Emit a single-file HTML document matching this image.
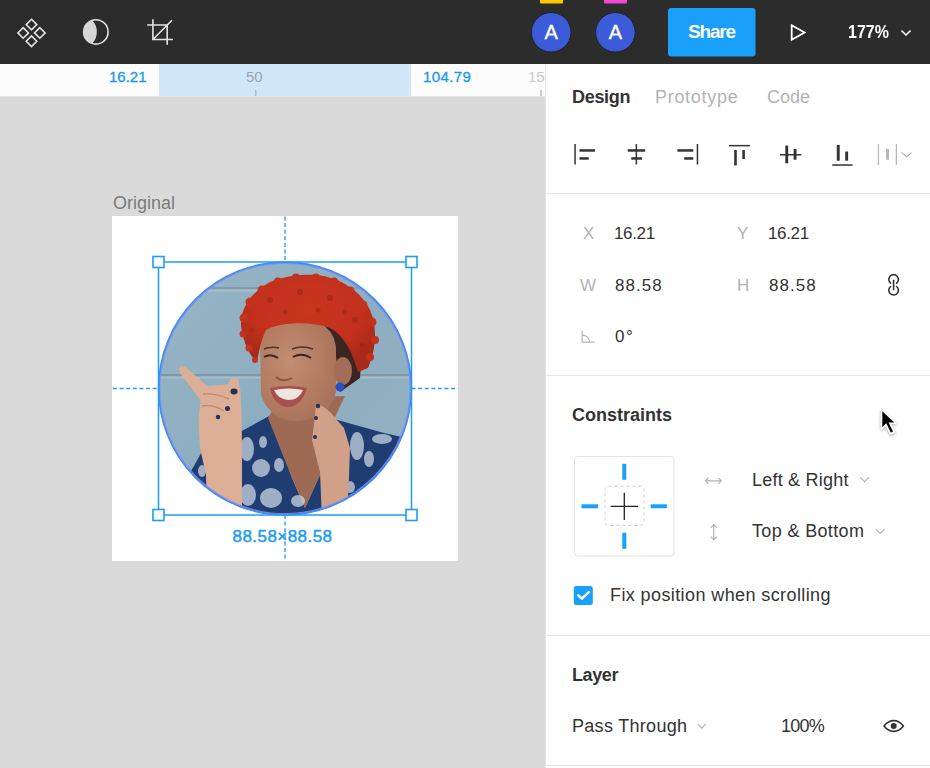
<!DOCTYPE html>
<html><head><meta charset="utf-8">
<style>
*{box-sizing:border-box;margin:0;padding:0}
html,body{width:930px;height:768px;overflow:hidden;background:#dadada;font-family:"Liberation Sans",sans-serif}
.a{position:absolute;white-space:nowrap}
#top{position:absolute;left:0;top:0;width:930px;height:64px;background:#2c2c2c}
#ruler{position:absolute;left:0;top:64px;width:546px;height:32px;background:#fcfcfc}
#rsel{position:absolute;left:159px;top:64px;width:252px;height:32px;background:#d0e7fa}
#rline{position:absolute;left:0;top:96px;width:546px;height:1px;background:#e6e6e6}
#panel{position:absolute;left:545px;top:64px;width:385px;height:704px;background:#fff;border-left:1px solid #e3e3e3}
.sep{position:absolute;left:546px;width:384px;height:1px;background:#e6e6e6}
.t{position:absolute;white-space:nowrap;line-height:1;color:#333}
</style></head><body>
<div id="top"></div>
<div id="ruler"></div>
<div id="rsel"></div>
<div id="rline"></div>
<div id="panel"></div>
<svg class="a" style="left:0;top:0" width="930" height="768" viewBox="0 0 930 768">
<!-- top bar icons -->
<g fill="none" stroke="#e3e3e3" stroke-width="1.6">
 <path d="M31.5,19.3 L36.8,24.6 L31.5,29.9 L26.2,24.6 Z"/>
 <path d="M23.2,27.6 L28.5,32.9 L23.2,38.2 L17.9,32.9 Z"/>
 <path d="M39.8,27.6 L45.1,32.9 L39.8,38.2 L34.5,32.9 Z"/>
 <path d="M31.5,35.9 L36.8,41.2 L31.5,46.5 L26.2,41.2 Z"/>
 <circle cx="95.9" cy="31.9" r="12.2"/>
 <path d="M147.2,25 H167.2 V44.7 M152.9,19.2 V39.5 H172.9 M152.9,39.5 L172,20.3"/>
</g>
<path d="M92.2,20.3 A12.2,12.2 0 0 0 92.2,43.5 A16.9,16.9 0 0 0 92.2,20.3 Z" fill="#d6d6d6"/>
<rect x="540" y="-2" width="23" height="5.5" rx="1" fill="#ffc700"/>
<rect x="604" y="-2" width="23" height="5.5" rx="1" fill="#ef48d4"/>
<circle cx="551.2" cy="32.3" r="19.8" fill="#3c5bd8" stroke="#222" stroke-width="1"/>
<circle cx="615.4" cy="32.3" r="19.8" fill="#3c5bd8" stroke="#222" stroke-width="1"/>
<rect x="668" y="8" width="87.5" height="48.5" rx="3" fill="#18a0fb"/>
<path d="M791.7,25.2 L804.6,32.5 L791.7,39.8 Z" fill="none" stroke="#fff" stroke-width="1.8"/>
<path d="M901.5,30.6 L906,35 L910.5,30.6" fill="none" stroke="#fff" stroke-width="1.5"/>
<!-- ruler ticks -->
<path d="M255.8,90 V96 M541,90 V96" stroke="#a0a0a0" stroke-width="1"/>
</svg>

<div class="sep" style="top:193px"></div>
<div class="sep" style="top:375px"></div>
<div class="sep" style="top:635px"></div>
<div class="sep" style="top:765px"></div>

<!-- top bar text -->
<div class="t" style="left:688px;top:22px;font-size:19px;font-weight:bold;color:#fff;letter-spacing:-1.2px">Share</div>
<div class="t" style="left:848px;top:22px;font-size:19px;font-weight:bold;color:#fff;transform:scaleX(0.84);transform-origin:0 0">177%</div>

<div class="t" style="left:544.6px;top:22px;font-size:20px;color:#fff;-webkit-text-stroke:0.35px #fff">A</div>
<div class="t" style="left:608.8px;top:22px;font-size:20px;color:#fff;-webkit-text-stroke:0.35px #fff">A</div>
<!-- ruler text -->
<div class="t" style="left:109px;top:69px;font-size:15px;color:#1a98ee;-webkit-text-stroke:0.3px #1a98ee">16.21</div>
<div class="t" style="left:246px;top:69px;font-size:15px;color:#9aa6ae">50</div>
<div class="t" style="left:423px;top:69px;font-size:15px;color:#1a98ee;-webkit-text-stroke:0.3px #1a98ee;letter-spacing:0.4px">104.79</div>
<div class="t" style="left:528px;top:69px;font-size:15px;color:#c8c8c8">15</div>

<!-- canvas -->
<div class="t" style="left:113px;top:194px;font-size:18px;color:#7a7a7a">Original</div>
<div class="a" style="left:112px;top:216px;width:346px;height:345px;background:#fff"></div>
<div class="t" style="left:232.5px;top:528px;font-size:17px;color:#1f9cf0;-webkit-text-stroke:0.5px #1f9cf0;letter-spacing:0.45px">88.58×88.58</div>

<!-- panel text -->
<div class="t" style="left:572px;top:88px;font-size:18px;font-weight:bold;color:#333;letter-spacing:-0.3px">Design</div>
<div class="t" style="left:655px;top:88px;font-size:18px;color:#b3b3b3;letter-spacing:0.7px">Prototype</div>
<div class="t" style="left:767px;top:88px;font-size:18px;color:#b3b3b3">Code</div>

<div class="t" style="left:583px;top:225px;font-size:17px;color:#b3b3b3">X</div>
<div class="t" style="left:614px;top:225px;font-size:17px;letter-spacing:-0.35px">16.21</div>
<div class="t" style="left:737px;top:225px;font-size:17px;color:#b3b3b3">Y</div>
<div class="t" style="left:768px;top:225px;font-size:17px;letter-spacing:-0.35px">16.21</div>
<div class="t" style="left:580px;top:277px;font-size:17px;color:#b3b3b3">W</div>
<div class="t" style="left:615px;top:277px;font-size:17px;letter-spacing:1.05px">88.58</div>
<div class="t" style="left:737px;top:277px;font-size:17px;color:#b3b3b3">H</div>
<div class="t" style="left:769px;top:277px;font-size:17px;letter-spacing:1.05px">88.58</div>
<div class="t" style="left:615px;top:328px;font-size:17px;letter-spacing:1.5px">0°</div>

<div class="t" style="left:572px;top:406px;font-size:18px;font-weight:bold">Constraints</div>
<div class="t" style="left:752px;top:471px;font-size:18px;letter-spacing:0.22px">Left &amp; Right</div>
<div class="t" style="left:752px;top:522px;font-size:18px;letter-spacing:0.35px">Top &amp; Bottom</div>
<div class="t" style="left:610px;top:586px;font-size:18px;letter-spacing:0.4px">Fix position when scrolling</div>

<div class="t" style="left:572px;top:666px;font-size:18px;font-weight:bold;letter-spacing:-0.4px">Layer</div>
<div class="t" style="left:572px;top:717px;font-size:18px;letter-spacing:0.3px">Pass Through</div>
<div class="t" style="left:781px;top:717px;font-size:18px;letter-spacing:-0.8px">100%</div>

<svg class="a" style="left:0;top:0" width="930" height="768" viewBox="0 0 930 768">
<defs>
 <clipPath id="cc"><circle cx="285" cy="388.5" r="126.5"/></clipPath>
</defs>
<!-- dashed guides -->
<g stroke="#2d9bf0" stroke-width="1.4" stroke-dasharray="4 2.6" fill="none">
 <path d="M285,216.5 V262"/>
 <path d="M285,515 V561"/>
 <path d="M113,388.5 H158.5"/>
 <path d="M411.5,388.5 H458"/>
</g>
<!-- photo -->
<g clip-path="url(#cc)">
 <defs>
  <linearGradient id="wall" x1="0" y1="0" x2="1" y2="1">
   <stop offset="0" stop-color="#98b6c6"/>
   <stop offset="0.5" stop-color="#8daec1"/>
   <stop offset="1" stop-color="#94b1c1"/>
  </linearGradient>
  <radialGradient id="hairg" cx="0.5" cy="0.35" r="0.6">
   <stop offset="0" stop-color="#c9361f"/>
   <stop offset="0.7" stop-color="#c2301c"/>
   <stop offset="1" stop-color="#a82a18"/>
  </radialGradient>
 </defs>
 <rect x="150" y="250" width="270" height="270" fill="url(#wall)"/>
 <!-- mortar -->
 <rect x="150" y="287" width="140" height="2.5" fill="#7f9aab"/>
 <rect x="150" y="289.5" width="140" height="2" fill="#a9bfcb"/>
 <rect x="150" y="374" width="270" height="2.5" fill="#7d98a9"/>
 <rect x="150" y="376.5" width="270" height="2" fill="#a8becb"/>
 <rect x="340" y="287" width="80" height="2" fill="#829cac"/>
 <!-- shirt -->
 <path d="M170,520 L185,480 L194,466 L206,444 L240,432 L271,415 L292,478 L305,508 L324,466 L327,430 L334,419 L384,433 L415,440 L415,520 Z" fill="#1f3d70"/>
 <!-- neck -->
 <path d="M268,418 L280,398 L345,396 L334,419 L327,430 L324,466 L305,508 L292,478 Z" fill="#9f6a54"/>
 <!-- dark hair near ear -->
 <path d="M322,322 L345,322 L362,350 L360,378 L340,392 L334,340 Z" fill="#3a2520"/>
 <!-- face -->
 <defs>
  <radialGradient id="faceg" cx="0.4" cy="0.4" r="0.65">
   <stop offset="0" stop-color="#c38d72"/>
   <stop offset="1" stop-color="#a9725a"/>
  </radialGradient>
 </defs>
 <path d="M260,335 C263,324 288,321 308,322 C326,323 334,332 336,348 L336,392 C332,410 316,421 297,421 C279,421 265,410 261,394 Z" fill="url(#faceg)"/>
 <ellipse cx="343" cy="371" rx="9" ry="14" fill="#a46d57"/>
 <!-- hair -->
 <path d="M257,362 C250,356 244,345 241,326 C240,310 250,293 270,282 C285,276 300,274 318,275 C340,278 360,290 370,310 C377,326 377,348 368,368 L358,372 C352,352 345,336 330,328 C310,321 280,322 266,330 C261,340 259,352 257,362 Z" fill="url(#hairg)"/>
 <g fill="#c2321d">
  <circle cx="244" cy="318" r="4.5"/><circle cx="250" cy="302" r="4.5"/><circle cx="262" cy="290" r="4.5"/>
  <circle cx="278" cy="282" r="4.5"/><circle cx="296" cy="278" r="4.5"/><circle cx="316" cy="278" r="4.5"/>
  <circle cx="334" cy="282" r="4.5"/><circle cx="350" cy="291" r="4.5"/><circle cx="363" cy="305" r="4.5"/>
  <circle cx="372" cy="322" r="4.5"/><circle cx="375" cy="340" r="4"/><circle cx="370" cy="357" r="4"/>
  <circle cx="243" cy="334" r="3.5"/><circle cx="249" cy="348" r="3.5"/><circle cx="255" cy="360" r="3"/>
 </g>
 <g fill="#9a2414" opacity="0.55">
  <circle cx="270" cy="300" r="3"/><circle cx="300" cy="292" r="3"/><circle cx="330" cy="298" r="3"/>
  <circle cx="355" cy="320" r="3"/><circle cx="318" cy="310" r="2.5"/><circle cx="285" cy="312" r="2.5"/>
  <circle cx="252" cy="330" r="2.5"/><circle cx="362" cy="345" r="2.5"/><circle cx="345" cy="312" r="2.5"/>
 </g>
 <!-- features -->
 <path d="M264,357 Q271,353 278,358 M293,357 Q302,352 311,358" fill="none" stroke="#3a2520" stroke-width="2"/>
 <path d="M264,349 Q271,346 279,348 M292,349 Q302,345 313,349" fill="none" stroke="#4e3328" stroke-width="1.4"/>
 <path d="M276,377 Q283,383 292,378" fill="none" stroke="#8a553f" stroke-width="2"/>
 <path d="M270,388 Q288,384 307,388 Q301,408 286,407 Q273,404 270,388 Z" fill="#a9504a"/>
 <path d="M274,390 Q289,387 303,390 Q299,400 288,400 Q278,399 274,390 Z" fill="#eee6e0"/>
 <circle cx="340" cy="387" r="4.5" fill="#2c4fc0"/>
 <!-- flowers -->
 <g fill="#d5deea" opacity="0.7">
  <ellipse cx="247" cy="449" rx="7" ry="12"/>
  <ellipse cx="261" cy="468" rx="9" ry="9"/>
  <ellipse cx="263" cy="442" rx="4" ry="6"/>
  <ellipse cx="279" cy="465" rx="5" ry="7"/>
  <ellipse cx="248" cy="495" rx="8" ry="11"/>
  <ellipse cx="271" cy="498" rx="11" ry="10"/>
  <ellipse cx="298" cy="501" rx="7" ry="6"/>
  <ellipse cx="357" cy="446" rx="7" ry="14"/>
  <ellipse cx="369" cy="459" rx="5" ry="8"/>
  <ellipse cx="382" cy="439" rx="10" ry="5"/>
  <ellipse cx="350" cy="487" rx="5" ry="6"/>
  <ellipse cx="202" cy="471" rx="4" ry="6"/>
 </g>
 <!-- left hand -->
 <path d="M181,366 Q185,365.5 188,369 L207,386 L228,384.5 L230,379.5 Q234,376.5 238.5,379 L240.5,392 L241.5,415 L242,445 L242,520 L207,520 L206,475 L200,448 L198.5,420 L200.5,400 L180,373 Q177.5,368.5 181,366 Z" fill="#dcae96"/>
 <path d="M203,394 Q216,393 229,399 M202,406 Q213,404 224,411" fill="none" stroke="#bf8b72" stroke-width="1.4"/>
 <ellipse cx="234" cy="391.5" rx="3.6" ry="3" fill="#2a2f55"/>
 <circle cx="227.5" cy="408.5" r="2.5" fill="#2a2f55"/>
 <circle cx="218" cy="417" r="2.2" fill="#2a2f55"/>
 <!-- right hand -->
 <path d="M316,405 Q322,404 330,412 L344,428 L350,448 L349,478 L347,520 L322,520 L320,472 L312,440 L314,424 Z" fill="#d0a088"/>
 <circle cx="318" cy="406" r="2.2" fill="#2a2f55"/>
 <circle cx="316" cy="418" r="2" fill="#2a2f55"/>
 <circle cx="315" cy="437" r="2" fill="#2a2f55"/>

</g>
<circle cx="285" cy="388.5" r="125.3" fill="none" stroke="#8d88ee" stroke-width="1.4" opacity="0.85"/>
<circle cx="285" cy="388.5" r="126.4" fill="none" stroke="#3f8ef5" stroke-width="1.6"/>
<!-- selection -->
<rect x="158.5" y="262" width="253" height="253" fill="none" stroke="#1c9cf6" stroke-width="1.5"/>
<g fill="#fff" stroke="#1c9cf6" stroke-width="1.6">
 <rect x="153" y="256.5" width="11" height="11"/>
 <rect x="406" y="256.5" width="11" height="11"/>
 <rect x="153" y="509.5" width="11" height="11"/>
 <rect x="406" y="509.5" width="11" height="11"/>
</g>
<!-- align icons -->
<g fill="#333">
 <rect x="574.3" y="144" width="1.5" height="20.5"/>
 <rect x="579.5" y="149.2" width="15.5" height="2.5"/>
 <rect x="579.5" y="157.2" width="9.2" height="2.5"/>

 <rect x="635.6" y="144" width="1.5" height="20.5"/>
 <rect x="627.7" y="149.2" width="17.5" height="2.5"/>
 <rect x="631.3" y="157.2" width="10.7" height="2.5"/>

 <rect x="696.7" y="144" width="1.5" height="20.5"/>
 <rect x="677.4" y="149.2" width="15.9" height="2.5"/>
 <rect x="684.2" y="157.2" width="9.1" height="2.5"/>

 <rect x="728.9" y="144.9" width="21" height="1.5"/>
 <rect x="734.2" y="150" width="2.6" height="15.5"/>
 <rect x="742.3" y="150" width="2.6" height="9"/>

 <rect x="780" y="154" width="21.3" height="1.5"/>
 <rect x="785.3" y="145.6" width="2.9" height="17.7"/>
 <rect x="793.6" y="149" width="2.9" height="10.7"/>

 <rect x="832.3" y="164.3" width="20.3" height="1.5"/>
 <rect x="836.8" y="144.9" width="2.9" height="15.8"/>
 <rect x="845.2" y="151.5" width="2.9" height="9.2"/>
</g>
<g fill="#b8b8b8">
 <rect x="877.8" y="144" width="1.3" height="21"/>
 <rect x="895.7" y="144" width="1.3" height="21"/>
 <rect x="886" y="148.9" width="3" height="10.9"/>
</g>
<path d="M901.8,152.4 L906.7,157 L911.6,152.4" fill="none" stroke="#b8b8b8" stroke-width="1.2"/>
<!-- angle icon -->
<path d="M582.2,330.5 V342.2 H594.5 M582.2,335.2 A7.2,7.2 0 0 1 589.6,342.2" fill="none" stroke="#b3b3b3" stroke-width="1.2"/>
<!-- link icon -->
<g fill="none" stroke="#333" stroke-width="1.6" stroke-linecap="round">
 <path d="M890.6,283.2 A4.8,4.8 0 1 1 896.6,283.2"/>
 <path d="M890.6,286.5 A4.8,4.8 0 1 0 896.6,286.5"/>
 <path d="M893.6,280.3 V289.5"/>
</g>
<!-- constraints widget -->
<rect x="574.5" y="456.5" width="99.5" height="99.5" rx="3" fill="#fff" stroke="#e3e3e3" stroke-width="1"/>
<rect x="605" y="486.3" width="39" height="39.2" rx="3.5" fill="none" stroke="#cfcfcf" stroke-width="1" stroke-dasharray="3 3"/>
<g fill="#18a0fb">
 <rect x="622.3" y="463.8" width="4" height="16"/>
 <rect x="622.3" y="532.8" width="4" height="16"/>
 <rect x="581.5" y="504.3" width="16.5" height="4"/>
 <rect x="650.7" y="504.3" width="16.2" height="4"/>
</g>
<path d="M610.7,506.4 H638.1 M624.3,492.7 V520.1" stroke="#222" stroke-width="1.3"/>
<!-- arrows -->
<g fill="none" stroke="#b3b3b3" stroke-width="1.2">
 <path d="M705.5,480.8 H721.3 M708.5,477.8 L705.5,480.8 L708.5,483.8 M718.3,477.8 L721.3,480.8 L718.3,483.8"/>
 <path d="M713.7,524.6 V539.6 M710.7,527.6 L713.7,524.6 L716.7,527.6 M710.7,536.6 L713.7,539.6 L716.7,536.6"/>
 <path d="M860.3,477.4 L864.6,481.7 L868.9,477.4"/>
 <path d="M876,529.3 L880.2,533.5 L884.4,529.3"/>
 <path d="M697.8,724.2 L701.8,728.2 L705.8,724.2"/>
</g>
<!-- checkbox -->
<rect x="573.8" y="586" width="19" height="19" rx="2.5" fill="#18a0fb"/>
<path d="M578.3,595.3 L581.9,598.7 L588.8,592.1" fill="none" stroke="#fff" stroke-width="2.5" stroke-linecap="round" stroke-linejoin="round"/>
<!-- eye -->
<path d="M884,726 C887.5,721.5 890.5,720.6 893.7,720.6 C896.9,720.6 899.9,721.5 903.4,726 C899.9,730.5 896.9,731.4 893.7,731.4 C890.5,731.4 887.5,730.5 884,726 Z" fill="none" stroke="#333" stroke-width="1.6" stroke-linejoin="round"/>
<circle cx="893.7" cy="726" r="3" fill="#333"/>
<!-- cursor -->
<g>
 <path d="M881.5,409.5 V429 L886,424.8 L890.5,434 L894.5,432.2 L890.2,423.3 L896.2,423.3 Z" fill="#fff" stroke="#fff" stroke-width="1.5" stroke-linejoin="round" style="filter:drop-shadow(0 1px 1.5px rgba(0,0,0,.35))"/>
 <path d="M882.3,411.2 V427.2 L886.2,423.3 L890.8,432.5 L893,431.5 L888.6,422.5 L894.2,422.5 Z" fill="#000"/>
</g>
</svg>
</body></html>
